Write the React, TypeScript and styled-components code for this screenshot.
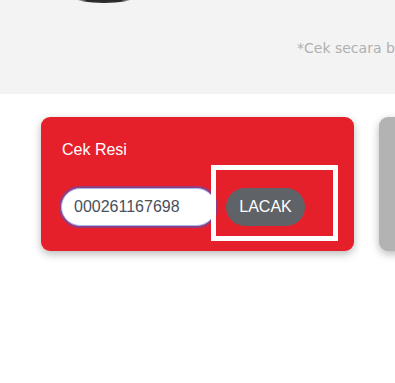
import React from 'react';
import styled, { createGlobalStyle } from 'styled-components';

const GlobalStyle = createGlobalStyle`
  html, body {
    margin: 0;
    padding: 0;
    background: #ffffff;
    font-family: Arial, 'Liberation Sans', sans-serif;
  }
`;

const Page = styled.div`
  width: 395px;
  height: 383px;
  overflow: hidden;
  background: #ffffff;
`;

const Header = styled.div`
  height: 94px;
  background: #f3f3f3;
  display: flex;
  flex-direction: column;
`;

const Badge = styled.svg`
  display: block;
  margin-left: 74px;
  width: 60px;
  height: 4px;
`;

const Note = styled.p`
  margin: 36px 0 0 297px;
  white-space: nowrap;
  font-family: 'DejaVu Sans', 'Open Sans', sans-serif;
  font-size: 14px;
  color: #b0b0b0;
`;

const Slider = styled.div`
  display: flex;
  gap: 25px;
  padding: 23px 0 0 41px;
`;

const Card = styled.div<{ $tone: 'red' | 'gray' }>`
  flex: 0 0 auto;
  width: 313px;
  height: 134px;
  box-sizing: border-box;
  padding: 24px 21px 0 21px;
  border-radius: 9px;
  background: ${p => (p.$tone === 'red' ? '#e6202b' : '#b3b3b3')};
  box-shadow: 0 3px 9px rgba(0, 0, 0, 0.28);
`;

const Title = styled.div`
  color: #ffffff;
  font-size: 16px;
  line-height: 18px;
`;

const Row = styled.div`
  display: flex;
  align-items: center;
  gap: 10px;
  margin-top: 29px;
`;

const Input = styled.input`
  box-sizing: border-box;
  width: 155px;
  height: 38px;
  margin-left: -1px;
  padding: 0 12px;
  border: 1px solid #a9b8e8;
  border-radius: 19px;
  background: #ffffff;
  box-shadow: 0 0 0 2px rgba(90, 80, 190, 0.6);
  font-family: Arial, 'Liberation Sans', sans-serif;
  font-size: 16px;
  color: #4a4f5a;
  outline: none;
`;

const ButtonWrap = styled.div`
  position: relative;
  display: flex;

  &::after {
    content: '';
    position: absolute;
    left: -15px;
    right: -33px;
    top: -23px;
    bottom: -15px;
    border: 5px solid #ffffff;
    pointer-events: none;
  }
`;

const Button = styled.button`
  width: 79px;
  height: 38px;
  border: none;
  border-radius: 19px;
  background: #5f6368;
  color: #ffffff;
  font-family: Arial, 'Liberation Sans', sans-serif;
  font-size: 16px;
  padding: 0;
  cursor: pointer;
`;

export default function App() {
  return (
    <Page>
      <GlobalStyle />
      <Header>
        <Badge viewBox="0 0 60 4">
          <defs>
            <linearGradient id="shade" x1="0" x2="1" y1="0" y2="0">
              <stop offset="0" stopColor="#888" stopOpacity="0.2" />
              <stop offset="0.2" stopColor="#2b2b2b" />
              <stop offset="0.8" stopColor="#2b2b2b" />
              <stop offset="1" stopColor="#888" stopOpacity="0.2" />
            </linearGradient>
          </defs>
          <ellipse cx="30" cy="-2" rx="29" ry="5" fill="url(#shade)" />
        </Badge>
        <Note>*Cek secara berkala status pengiriman</Note>
      </Header>
      <Slider>
        <Card $tone="red">
          <Title>Cek Resi</Title>
          <Row>
            <Input defaultValue="000261167698" />
            <ButtonWrap>
              <Button>LACAK</Button>
            </ButtonWrap>
          </Row>
        </Card>
        <Card $tone="gray" />
      </Slider>
    </Page>
  );
}
